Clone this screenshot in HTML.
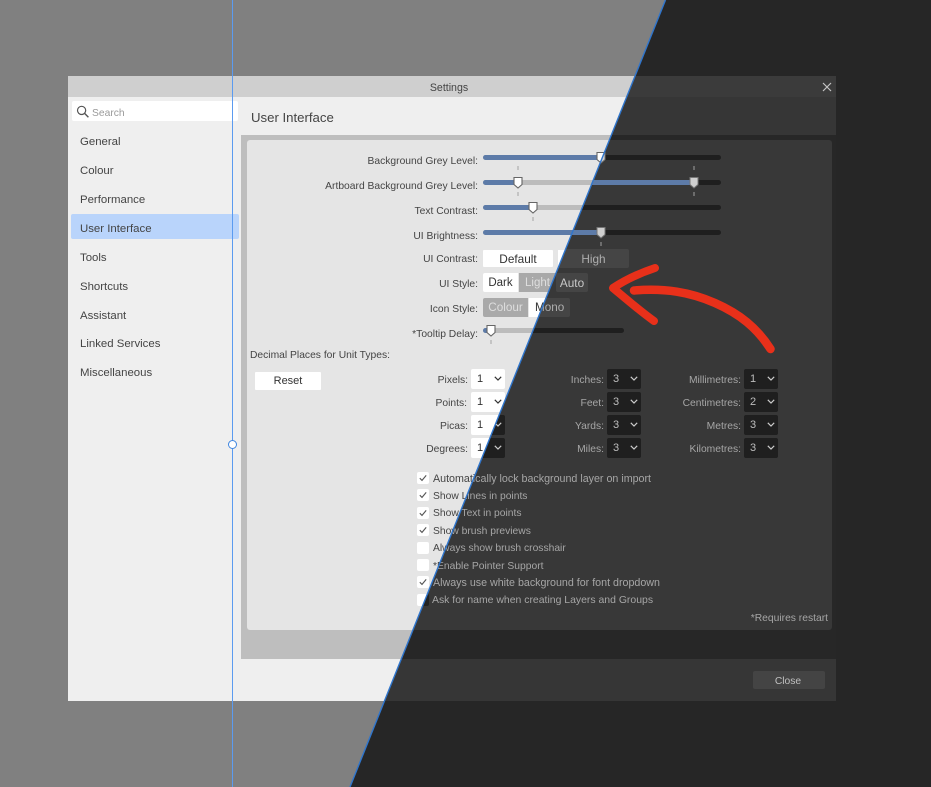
<!DOCTYPE html>
<html><head><meta charset="utf-8"><style>
html,body{margin:0;padding:0;width:931px;height:787px;overflow:hidden;background:#808080}
*{box-sizing:border-box}
body{font-family:"Liberation Sans",sans-serif;font-size:10.3px}
.layer{position:absolute;left:0;top:0;width:931px;height:787px;overflow:hidden}
.b{position:absolute}
.t{position:absolute;white-space:nowrap;line-height:14px;height:14px}
.r{text-align:right;width:200px;margin-top:1px}
.c{text-align:center}
#L{background:#808080;color:#444;filter:blur(.3px)}
#D{background:#262626;color:#a6a6a6;clip-path:polygon(665.5px 0,931px 0,931px 787px,350px 787px)}
#DI{position:absolute;left:0;top:0;width:931px;height:787px;filter:blur(.3px)}
.track{position:absolute;height:5px;border-radius:3px}
#L .track{background:#bcbcbc}
#D .track{background:#1f1f1f}
.fill{position:absolute;height:5px;border-radius:3px;background:#5d7ba8}
.tick{position:absolute;width:2px;height:4px;background:#c4c4c4}
#D .tick{background:#6c6c6c}
.dd{position:absolute;width:34px;height:20px;border-radius:2px;line-height:20px;padding-left:6px;font-size:11px}
#L .dd{background:#fff;color:#333}
#D .dd{background:#1f1f1f;color:#bdbdbd}
.dd svg{position:absolute;left:23px;top:7px}
.cb{position:absolute;left:417px;width:12px;height:12px;border-radius:2px;background:#fff}
#D .cb{background:#222}
.cb svg{position:absolute;left:2px;top:2px}
.s{position:absolute;font-size:11.4px;left:80px;color:#444;line-height:14px;white-space:nowrap;margin-top:1px}
</style></head><body>

<div class="layer" id="L">
  <div class="b" style="left:68px;top:76px;width:768px;height:625px;background:#efefef"></div>
  <div class="b" style="left:68px;top:76px;width:768px;height:21px;background:#cfcfcf"></div>
  <div class="t c" style="left:349px;top:81px;width:200px;font-size:10.6px;color:#444">Settings</div>

  <div class="b" style="left:72px;top:101px;width:166px;height:20px;background:#fff;border-radius:2px"></div>
  <svg class="b" style="left:76px;top:105px" width="14" height="14" viewBox="0 0 14 14"><circle cx="5.6" cy="5.4" r="4.1" fill="none" stroke="#555" stroke-width="1.2"/><path d="M8.6 8.4L12.4 12.2" stroke="#555" stroke-width="1.4"/></svg>
  <div class="t" style="left:92px;top:107px;color:#9a9a9a">Search</div>
  <div class="b" style="left:71px;top:214px;width:168px;height:25px;background:#b9d4fb;border-radius:2px"></div>
  <div class="s" style="top:134px">General</div>
  <div class="s" style="top:163px">Colour</div>
  <div class="s" style="top:192px">Performance</div>
  <div class="s" style="top:221px">User Interface</div>
  <div class="s" style="top:250px">Tools</div>
  <div class="s" style="top:279px">Shortcuts</div>
  <div class="s" style="top:308px">Assistant</div>
  <div class="s" style="top:336px">Linked Services</div>
  <div class="s" style="top:365px">Miscellaneous</div>

  <div class="t" style="left:251px;top:110px;font-size:13.2px;color:#444;line-height:15px;height:15px">User Interface</div>
  <div class="b" style="left:241px;top:135px;width:595px;height:524px;background:#bebebe"></div>
  <div class="b" style="left:247px;top:140px;width:585px;height:490px;background:#e5e5e5;border-radius:3px"></div>

  <div class="t r" style="left:278px;top:154px">Background Grey Level:</div>
  <div class="t r" style="left:278px;top:179px">Artboard Background Grey Level:</div>
  <div class="t r" style="left:278px;top:204px">Text Contrast:</div>
  <div class="t r" style="left:278px;top:229px">UI Brightness:</div>
  <div class="t r" style="left:278px;top:252px">UI Contrast:</div>
  <div class="t r" style="left:278px;top:277px">UI Style:</div>
  <div class="t r" style="left:278px;top:302px">Icon Style:</div>
  <div class="t r" style="left:278px;top:327px">*Tooltip Delay:</div>

  <div class="track" style="left:483px;top:155px;width:238px"></div>
  <div class="fill" style="left:483px;top:155px;width:118px"></div>
  <svg class="b" style="left:596px;top:151px" width="10" height="13" viewBox="0 0 10 13"><path d="M1 1.5H9V8.5L5 12L1 8.5Z" fill="#fff" stroke="#666" stroke-width="1.1"/></svg>
  <div class="track" style="left:483px;top:180px;width:238px"></div>
  <div class="fill" style="left:483px;top:180px;width:35px"></div>
  <div class="tick" style="left:517px;top:166px"></div>
  <div class="tick" style="left:517px;top:192px"></div>
  <svg class="b" style="left:513px;top:176px" width="10" height="13" viewBox="0 0 10 13"><path d="M1 1.5H9V8.5L5 12L1 8.5Z" fill="#fff" stroke="#666" stroke-width="1.1"/></svg>
  <div class="track" style="left:483px;top:205px;width:238px"></div>
  <div class="fill" style="left:483px;top:205px;width:50px"></div>
  <div class="tick" style="left:532px;top:217px"></div>
  <svg class="b" style="left:528px;top:201px" width="10" height="13" viewBox="0 0 10 13"><path d="M1 1.5H9V8.5L5 12L1 8.5Z" fill="#fff" stroke="#666" stroke-width="1.1"/></svg>
  <div class="track" style="left:483px;top:230px;width:238px"></div>
  <div class="fill" style="left:483px;top:230px;width:118px"></div>

  <div class="b" style="left:483px;top:250px;width:70px;height:17px;background:#fff;border-radius:1px"></div>
  <div class="t c" style="left:483px;top:252px;width:70px;font-size:11.8px;color:#333">Default</div>
  <div class="b" style="left:558px;top:250px;width:30px;height:17px;background:#fff"></div>

  <div class="b" style="left:483px;top:273px;width:35px;height:19px;background:#fff;border-radius:2px 0 0 2px"></div>
  <div class="t c" style="left:483px;top:276px;width:35px;font-size:11.5px;color:#333">Dark</div>
  <div class="b" style="left:519px;top:273px;width:37px;height:19px;background:#a9a9a9"></div>
  <div class="t c" style="left:519px;top:276px;width:37px;font-size:11.5px;color:#dedede">Light</div>

  <div class="b" style="left:483px;top:298px;width:45px;height:19px;background:#a9a9a9;border-radius:2px 0 0 2px"></div>
  <div class="t c" style="left:483px;top:301px;width:45px;font-size:11.7px;color:#dedede">Colour</div>
  <div class="b" style="left:529px;top:298px;width:30px;height:19px;background:#fff"></div>
  <div class="t" style="left:535px;top:301px;font-size:11.7px;color:#333">Mono</div>

  <div class="track" style="left:483px;top:328px;width:141px"></div>
  <div class="fill" style="left:483px;top:328px;width:8px"></div>
  <div class="tick" style="left:490px;top:340px"></div>
  <svg class="b" style="left:486px;top:324px" width="10" height="13" viewBox="0 0 10 13"><path d="M1 1.5H9V8.5L5 12L1 8.5Z" fill="#fff" stroke="#666" stroke-width="1.1"/></svg>

  <div class="t" style="left:250px;top:349px;color:#444">Decimal Places for Unit Types:</div>
  <div class="b" style="left:255px;top:372px;width:66px;height:18px;background:#fff;border-radius:1px"></div>
  <div class="t c" style="left:255px;top:374px;width:66px;font-size:11px;color:#333">Reset</div>

  <div class="t r" style="left:268px;top:373px">Pixels:</div>
  <div class="t r" style="left:267px;top:396px">Points:</div>
  <div class="t r" style="left:268px;top:419px">Picas:</div>
  <div class="t r" style="left:268px;top:442px">Degrees:</div>
  <div class="dd" style="left:471px;top:369px">1<svg width="8" height="5" viewBox="0 0 8 5"><path d="M.8 .8L4 4L7.2 .8" fill="none" stroke="#333" stroke-width="1.2"/></svg></div>
  <div class="dd" style="left:471px;top:392px">1<svg width="8" height="5" viewBox="0 0 8 5"><path d="M.8 .8L4 4L7.2 .8" fill="none" stroke="#333" stroke-width="1.2"/></svg></div>
  <div class="dd" style="left:471px;top:415px">1</div>
  <div class="dd" style="left:471px;top:438px">1</div>

  <div class="cb" style="top:472px"><svg width="8" height="8" viewBox="0 0 8 8"><path d="M.8 4.2L3 6.4L7.2 1.4" fill="none" stroke="#555" stroke-width="1.1"/></svg></div>
  <div class="cb" style="top:489px"><svg width="8" height="8" viewBox="0 0 8 8"><path d="M.8 4.2L3 6.4L7.2 1.4" fill="none" stroke="#555" stroke-width="1.1"/></svg></div>
  <div class="cb" style="top:507px"><svg width="8" height="8" viewBox="0 0 8 8"><path d="M.8 4.2L3 6.4L7.2 1.4" fill="none" stroke="#555" stroke-width="1.1"/></svg></div>
  <div class="cb" style="top:524px"><svg width="8" height="8" viewBox="0 0 8 8"><path d="M.8 4.2L3 6.4L7.2 1.4" fill="none" stroke="#555" stroke-width="1.1"/></svg></div>
  <div class="cb" style="top:542px"></div>
  <div class="cb" style="top:559px"></div>
  <div class="cb" style="top:576px"><svg width="8" height="8" viewBox="0 0 8 8"><path d="M.8 4.2L3 6.4L7.2 1.4" fill="none" stroke="#555" stroke-width="1.1"/></svg></div>
  <div class="cb" style="top:594px"></div>
  <div class="t" style="left:433px;top:472px;font-size:10.7px">Automatically lock background layer on import</div>
  <div class="t" style="left:433px;top:490px">Show Lines in points</div>
  <div class="t" style="left:433px;top:507px">Show Text in points</div>
  <div class="t" style="left:433px;top:525px">Show brush previews</div>
  <div class="t" style="left:433px;top:542px">Always show brush crosshair</div>
  <div class="t" style="left:433px;top:560px">*Enable Pointer Support</div>
  <div class="t" style="left:433px;top:576px;font-size:10.7px">Always use white background for font dropdown</div>

  <div class="b" style="left:232px;top:0;width:1px;height:787px;background:#5b9bf0"></div>
  <div class="b" style="left:228px;top:440px;width:9px;height:9px;border-radius:50%;background:#fff;border:1px solid #3f86e0"></div>
</div>

<div class="layer" id="D"><div id="DI">
  <div class="b" style="left:68px;top:76px;width:768px;height:625px;background:#363636"></div>
  <div class="b" style="left:68px;top:76px;width:768px;height:21px;background:#3b3b3b"></div>
  <svg class="b" style="left:822px;top:82px" width="10" height="10" viewBox="0 0 10 10"><path d="M1 1L9 9M9 1L1 9" stroke="#c4c4c4" stroke-width="1.2"/></svg>

  <div class="b" style="left:241px;top:135px;width:595px;height:524px;background:#272727"></div>
  <div class="b" style="left:247px;top:140px;width:585px;height:490px;background:#383838;border-radius:3px"></div>

  <div class="track" style="left:483px;top:155px;width:238px"></div>
  <div class="fill" style="left:483px;top:155px;width:118px"></div>
  <svg class="b" style="left:596px;top:151px" width="10" height="13" viewBox="0 0 10 13"><path d="M1 1.5H9V8.5L5 12L1 8.5Z" fill="#cfcfcf" stroke="#777" stroke-width="1"/></svg>
  <div class="track" style="left:483px;top:180px;width:238px"></div>
  <div class="fill" style="left:483px;top:180px;width:211px"></div>
  <div class="tick" style="left:693px;top:166px"></div>
  <div class="tick" style="left:693px;top:192px"></div>
  <svg class="b" style="left:689px;top:176px" width="10" height="13" viewBox="0 0 10 13"><path d="M1 1.5H9V8.5L5 12L1 8.5Z" fill="#cfcfcf" stroke="#777" stroke-width="1"/></svg>
  <div class="track" style="left:483px;top:205px;width:238px"></div>
  <div class="track" style="left:483px;top:230px;width:238px"></div>
  <div class="fill" style="left:483px;top:230px;width:118px"></div>
  <div class="tick" style="left:600px;top:242px"></div>
  <svg class="b" style="left:596px;top:226px" width="10" height="13" viewBox="0 0 10 13"><path d="M1 1.5H9V8.5L5 12L1 8.5Z" fill="#cfcfcf" stroke="#777" stroke-width="1"/></svg>

  <div class="b" style="left:558px;top:249px;width:71px;height:19px;background:#454545;border-radius:2px"></div>
  <div class="t c" style="left:558px;top:252px;width:71px;font-size:11.8px;color:#aeaeae">High</div>
  <div class="b" style="left:556px;top:273px;width:32px;height:19px;background:#454545;border-radius:2px"></div>
  <div class="t c" style="left:556px;top:276px;width:32px;font-size:11.8px;color:#c8c8c8">Auto</div>
  <div class="b" style="left:529px;top:298px;width:41px;height:19px;background:#454545;border-radius:2px"></div>
  <div class="t" style="left:535px;top:301px;font-size:11.7px;color:#aeaeae">Mono</div>
  <div class="track" style="left:483px;top:328px;width:141px"></div>

  <div class="dd" style="left:471px;top:415px"><svg width="8" height="5" viewBox="0 0 8 5"><path d="M.8 .8L4 4L7.2 .8" fill="none" stroke="#ccc" stroke-width="1.2"/></svg></div>
  <div class="dd" style="left:471px;top:438px"><svg width="8" height="5" viewBox="0 0 8 5"><path d="M.8 .8L4 4L7.2 .8" fill="none" stroke="#ccc" stroke-width="1.2"/></svg></div>

  <div class="t r" style="left:404px;top:373px">Inches:</div>
  <div class="t r" style="left:404px;top:396px">Feet:</div>
  <div class="t r" style="left:404px;top:419px">Yards:</div>
  <div class="t r" style="left:404px;top:442px">Miles:</div>
  <div class="t r" style="left:541px;top:373px">Millimetres:</div>
  <div class="t r" style="left:541px;top:396px">Centimetres:</div>
  <div class="t r" style="left:541px;top:419px">Metres:</div>
  <div class="t r" style="left:541px;top:442px">Kilometres:</div>
  <div class="dd" style="left:607px;top:369px">3<svg width="8" height="5" viewBox="0 0 8 5"><path d="M.8 .8L4 4L7.2 .8" fill="none" stroke="#ccc" stroke-width="1.2"/></svg></div>
  <div class="dd" style="left:607px;top:392px">3<svg width="8" height="5" viewBox="0 0 8 5"><path d="M.8 .8L4 4L7.2 .8" fill="none" stroke="#ccc" stroke-width="1.2"/></svg></div>
  <div class="dd" style="left:607px;top:415px">3<svg width="8" height="5" viewBox="0 0 8 5"><path d="M.8 .8L4 4L7.2 .8" fill="none" stroke="#ccc" stroke-width="1.2"/></svg></div>
  <div class="dd" style="left:607px;top:438px">3<svg width="8" height="5" viewBox="0 0 8 5"><path d="M.8 .8L4 4L7.2 .8" fill="none" stroke="#ccc" stroke-width="1.2"/></svg></div>
  <div class="dd" style="left:744px;top:369px">1<svg width="8" height="5" viewBox="0 0 8 5"><path d="M.8 .8L4 4L7.2 .8" fill="none" stroke="#ccc" stroke-width="1.2"/></svg></div>
  <div class="dd" style="left:744px;top:392px">2<svg width="8" height="5" viewBox="0 0 8 5"><path d="M.8 .8L4 4L7.2 .8" fill="none" stroke="#ccc" stroke-width="1.2"/></svg></div>
  <div class="dd" style="left:744px;top:415px">3<svg width="8" height="5" viewBox="0 0 8 5"><path d="M.8 .8L4 4L7.2 .8" fill="none" stroke="#ccc" stroke-width="1.2"/></svg></div>
  <div class="dd" style="left:744px;top:438px">3<svg width="8" height="5" viewBox="0 0 8 5"><path d="M.8 .8L4 4L7.2 .8" fill="none" stroke="#ccc" stroke-width="1.2"/></svg></div>

  <div class="cb" style="top:594px"></div>
  <div class="t" style="left:433px;top:472px;font-size:10.7px">Automatically lock background layer on import</div>
  <div class="t" style="left:433px;top:490px">Show Lines in points</div>
  <div class="t" style="left:433px;top:507px">Show Text in points</div>
  <div class="t" style="left:433px;top:525px">Show brush previews</div>
  <div class="t" style="left:433px;top:542px">Always show brush crosshair</div>
  <div class="t" style="left:433px;top:560px">*Enable Pointer Support</div>
  <div class="t" style="left:433px;top:576px;font-size:10.7px">Always use white background for font dropdown</div>
  <div class="t" style="left:432px;top:594px;font-size:10.45px">Ask for name when creating Layers and Groups</div>
  <div class="t r" style="left:628px;top:611px">*Requires restart</div>

  <div class="b" style="left:753px;top:671px;width:72px;height:18px;background:#444;border-radius:2px"></div>
  <div class="t c" style="left:752px;top:675px;width:72px;color:#c0c0c0">Close</div>
</div></div>

<svg class="layer" width="931" height="787" viewBox="0 0 931 787" style="pointer-events:none">
  <path d="M665.5 0L350 787" stroke="#2f75cc" stroke-width="1.4" fill="none"/>
  <path d="M634 290.5C665 288 690 292 715 303C740 314 757 328 770.5 349" fill="none" stroke="#e8301a" stroke-width="8.5" stroke-linecap="round" stroke-linejoin="round"/>
  <path d="M655 268C640 273 625 280 613 288C625 298 640 311 654 321" fill="none" stroke="#e8301a" stroke-width="8" stroke-linecap="round" stroke-linejoin="round"/>
</svg>
</body></html>
